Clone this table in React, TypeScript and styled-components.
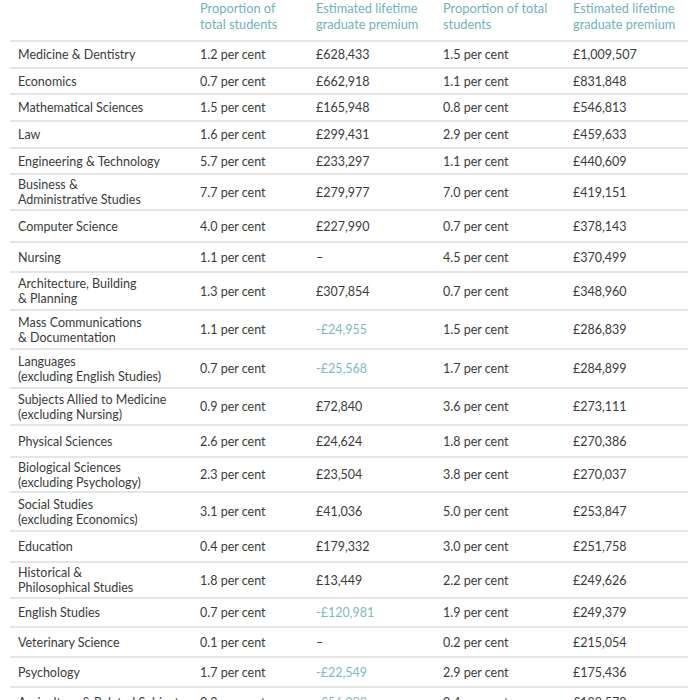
import React from "react";
import styled, { createGlobalStyle } from "styled-components";

const Global = createGlobalStyle`
  html, body { margin: 0; padding: 0; background: #ffffff; }
  body { font-family: Lato, "Open Sans", sans-serif; }
`;

const Page = styled.div`
  width: 700px;
  height: 700px;
  overflow: hidden;
  padding: 0 12px 0 10px;
  box-sizing: border-box;
`;

const Table = styled.table`
  width: 678px;
  border-collapse: collapse;
  table-layout: fixed;
  font-size: 12.5px;
  color: #3b3b3b;
`;

const Col = styled.col<{ $w: number }>`
  width: ${(p) => p.$w}px;
`;

const HeadCell = styled.th`
  text-align: left;
  vertical-align: top;
  font-weight: 400;
  font-size: 12.8px;
  color: #6fb4b7;
  line-height: 16px;
  padding: 0 8px 8px 8px;
`;

const HeadRow = styled.tr`
  border-bottom: 2px solid #e5e5e5;
`;

const Row = styled.tr<{ $h: number }>`
  height: ${(p) => p.$h}px;
  border-bottom: 2px solid #e5e5e5;
`;

const Cell = styled.td<{ $neg?: boolean }>`
  padding: 0 8px;
  vertical-align: middle;
  line-height: 15px;
  color: ${(p) => (p.$neg ? "#7ebbbd" : "#3b3b3b")};
  white-space: nowrap;
`;

type R = [string, string, string, string, string, number];

const rows: R[] = [
  ["Medicine & Dentistry", "1.2 per cent", "£628,433", "1.5 per cent", "£1,009,507", 27],
  ["Economics", "0.7 per cent", "£662,918", "1.1 per cent", "£831,848", 26],
  ["Mathematical Sciences", "1.5 per cent", "£165,948", "0.8 per cent", "£546,813", 27],
  ["Law", "1.6 per cent", "£299,431", "2.9 per cent", "£459,633", 27],
  ["Engineering & Technology", "5.7 per cent", "£233,297", "1.1 per cent", "£440,609", 26],
  ["Business &\nAdministrative Studies", "7.7 per cent", "£279,977", "7.0 per cent", "£419,151", 36],
  ["Computer Science", "4.0 per cent", "£227,990", "0.7 per cent", "£378,143", 32],
  ["Nursing", "1.1 per cent", "–", "4.5 per cent", "£370,499", 30],
  ["Architecture, Building\n& Planning", "1.3 per cent", "£307,854", "0.7 per cent", "£348,960", 38],
  ["Mass Communications\n& Documentation", "1.1 per cent", "-£24,955", "1.5 per cent", "£286,839", 39],
  ["Languages\n(excluding English Studies)", "0.7 per cent", "-£25,568", "1.7 per cent", "£284,899", 39],
  ["Subjects Allied to Medicine\n(excluding Nursing)", "0.9 per cent", "£72,840", "3.6 per cent", "£273,111", 37],
  ["Physical Sciences", "2.6 per cent", "£24,624", "1.8 per cent", "£270,386", 32],
  ["Biological Sciences\n(excluding Psychology)", "2.3 per cent", "£23,504", "3.8 per cent", "£270,037", 35],
  ["Social Studies\n(excluding Economics)", "3.1 per cent", "£41,036", "5.0 per cent", "£253,847", 39],
  ["Education", "0.4 per cent", "£179,332", "3.0 per cent", "£251,758", 31],
  ["Historical &\nPhilosophical Studies", "1.8 per cent", "£13,449", "2.2 per cent", "£249,626", 36],
  ["English Studies", "0.7 per cent", "-£120,981", "1.9 per cent", "£249,379", 29],
  ["Veterinary Science", "0.1 per cent", "–", "0.2 per cent", "£215,054", 30],
  ["Psychology", "1.7 per cent", "-£22,549", "2.9 per cent", "£175,436", 30],
  ["Agriculture & Related Subjects", "0.3 per cent", "-£56,388", "0.4 per cent", "£188,570", 30],
];

const Lines = ({ text }: { text: string }) => (
  <>
    {text.split("\n").map((t, i) => (
      <React.Fragment key={i}>
        {i > 0 && <br />}
        {t}
      </React.Fragment>
    ))}
  </>
);

export default function App() {
  return (
    <>
      <Global />
      <Page>
        <Table>
          <colgroup>
            <Col $w={182} />
            <Col $w={116} />
            <Col $w={127} />
            <Col $w={130} />
            <Col $w={123} />
          </colgroup>
          <thead>
            <HeadRow>
              <HeadCell />
              <HeadCell>
                Proportion of
                <br />
                total students
              </HeadCell>
              <HeadCell>
                Estimated lifetime
                <br />
                graduate premium
              </HeadCell>
              <HeadCell>
                Proportion of total
                <br />
                students
              </HeadCell>
              <HeadCell>
                Estimated lifetime
                <br />
                graduate premium
              </HeadCell>
            </HeadRow>
          </thead>
          <tbody>
            {rows.map((r) => (
              <Row key={r[0]} $h={r[5]}>
                <Cell>
                  <Lines text={r[0]} />
                </Cell>
                <Cell>{r[1]}</Cell>
                <Cell $neg={r[2].startsWith("-")}>{r[2]}</Cell>
                <Cell>{r[3]}</Cell>
                <Cell>{r[4]}</Cell>
              </Row>
            ))}
          </tbody>
        </Table>
      </Page>
    </>
  );
}
